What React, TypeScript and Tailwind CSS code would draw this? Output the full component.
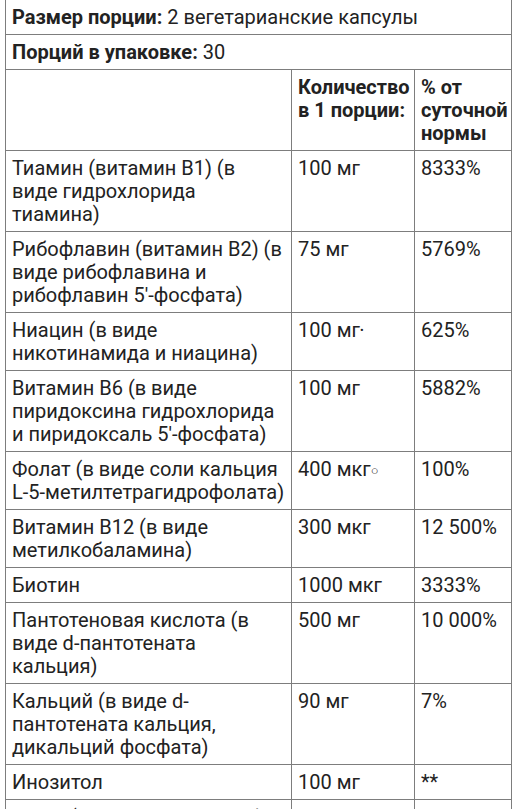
import React from 'react';

type Row = {
  name: string[];
  amount: React.ReactNode;
  percent: string;
};

const rows: Row[] = [
  { name: ['Тиамин (витамин B1) (в', 'виде гидрохлорида', 'тиамина)'], amount: '100 мг', percent: '8333%' },
  { name: ['Рибофлавин (витамин B2) (в', 'виде рибофлавина и', 'рибофлавин 5\'-фосфата)'], amount: '75 мг', percent: '5769%' },
  {
    name: ['Ниацин (в виде', 'никотинамида и ниацина)'],
    amount: (
      <>
        100 мг<span className="text-[11px] align-[3px]">•</span>
      </>
    ),
    percent: '625%',
  },
  { name: ['Витамин B6 (в виде', 'пиридоксина гидрохлорида', 'и пиридоксаль 5\'-фосфата)'], amount: '100 мг', percent: '5882%' },
  {
    name: ['Фолат (в виде соли кальция', 'L-5-метилтетрагидрофолата)'],
    amount: (
      <>
        400 мкг<span className="text-[13px] align-[1px]">○</span>
      </>
    ),
    percent: '100%',
  },
  { name: ['Витамин B12 (в виде', 'метилкобаламина)'], amount: '300 мкг', percent: '12 500%' },
  { name: ['Биотин'], amount: '1000 мкг', percent: '3333%' },
  { name: ['Пантотеновая кислота (в', 'виде d-пантотената', 'кальция)'], amount: '500 мг', percent: '10 000%' },
  { name: ['Кальций (в виде d-', 'пантотената кальция,', 'дикальций фосфата)'], amount: '90 мг', percent: '7%' },
  { name: ['Инозитол'], amount: '100 мг', percent: '**' },
  { name: ['ПАБК (в виде парааминобензойной', 'кислоты)'], amount: '50 мг', percent: '**' },
];

const cell = 'border border-[#7d7d7d] px-[6px] py-[5.5px] align-top whitespace-nowrap overflow-hidden';

const App: React.FC = () => {
  return (
    <div className="w-[515px] h-[809px] overflow-hidden bg-white font-['Roboto',sans-serif] text-[20px] leading-[23px] text-[#222]">
      <table className="ml-[5px] -mt-[1px] w-[506px] table-fixed border-collapse">
        <colgroup>
          <col className="w-[286px]" />
          <col className="w-[123px]" />
          <col className="w-[97px]" />
        </colgroup>
        <tbody>
          <tr>
            <td colSpan={3} className={cell}>
              <span className="font-bold">Размер порции:</span> 2 вегетарианские капсулы
            </td>
          </tr>
          <tr>
            <td colSpan={3} className={cell}>
              <span className="font-bold">Порций в упаковке:</span> 30
            </td>
          </tr>
          <tr className="font-bold">
            <td className={cell}></td>
            <td className={cell}>
              Количество
              <br />в 1 порции:
            </td>
            <td className={cell}>
              % от
              <br />
              суточной
              <br />
              нормы
            </td>
          </tr>
          {rows.map((row, i) => (
            <tr key={i}>
              <td className={cell}>
                {row.name.map((line, j) => (
                  <div key={j}>{line}</div>
                ))}
              </td>
              <td className={cell}>{row.amount}</td>
              <td className={cell}>{row.percent}</td>
            </tr>
          ))}
        </tbody>
      </table>
    </div>
  );
};

export default App;
